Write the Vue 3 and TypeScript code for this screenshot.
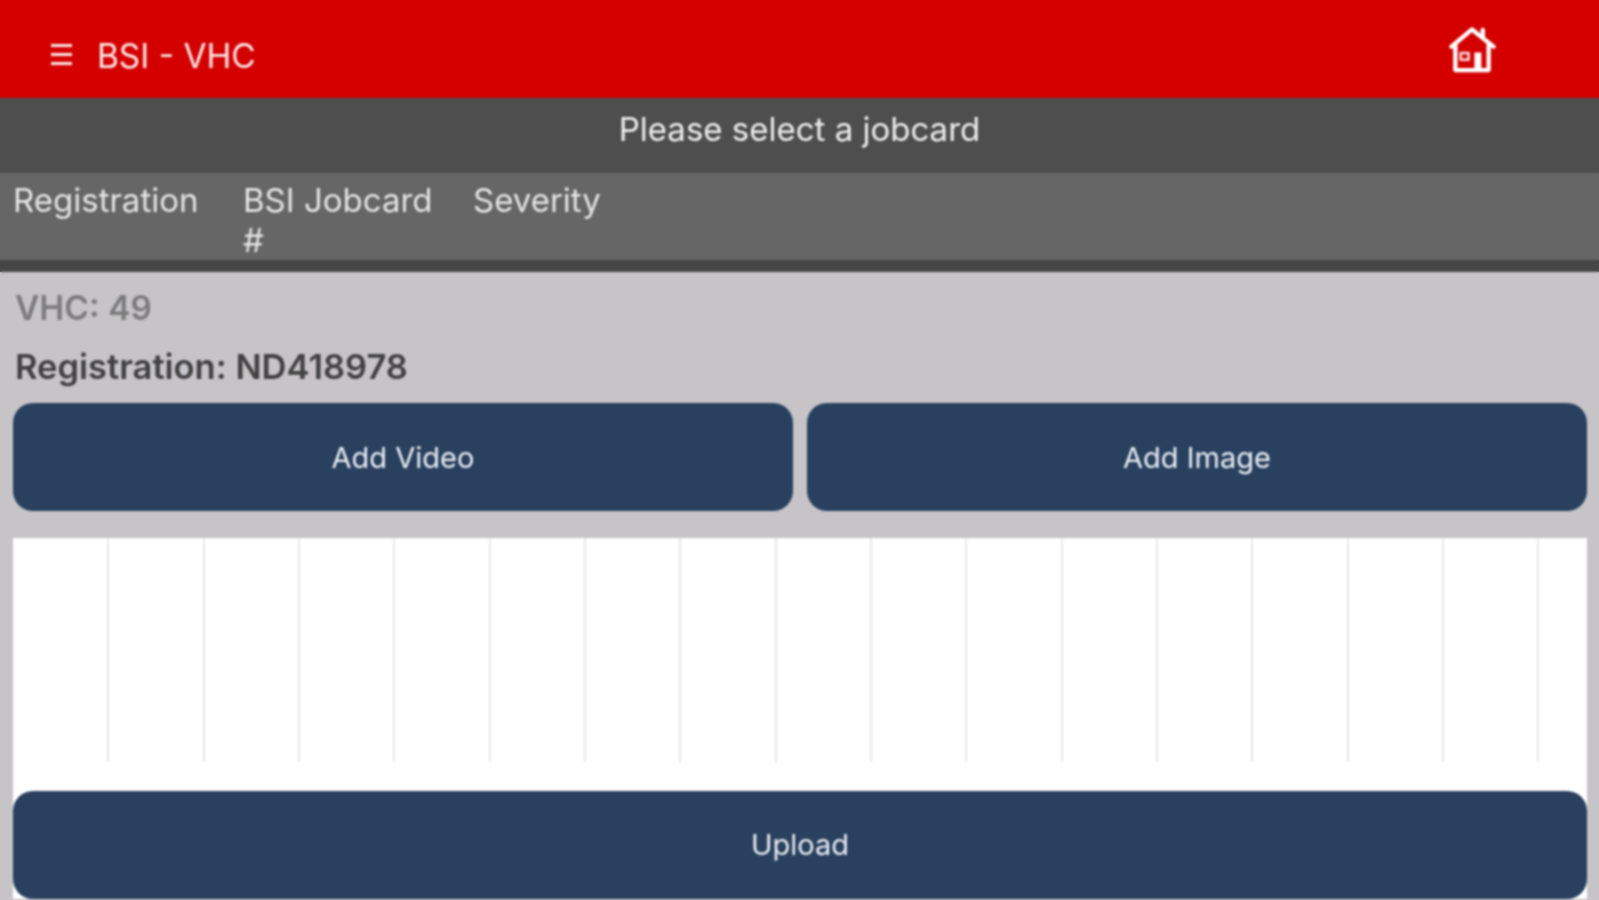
<script setup lang="ts">
const columns: string[] = ['Registration', 'BSI Jobcard #', 'Severity']
const imageSlots: number[] = Array.from({ length: 16 }, (_, i) => i)
</script>

<template>
  <div class="page">
    <header class="topbar">
      <div class="topbar--left">
        <div class="burger">
          <span></span>
          <span></span>
          <span></span>
        </div>
        <span class="topbar--title">BSI - VHC</span>
      </div>
      <svg class="home" viewBox="0 0 48 48" fill="none" stroke="#fff" stroke-width="4.4" stroke-linejoin="round" stroke-linecap="round">
        <path d="M3 20 L24 2.5 L46 20" />
        <path d="M35 3 V10" />
        <path d="M7 18 V44 H41 V18" />
        <rect x="26.5" y="26" width="7" height="18" fill="#fff" stroke="none" />
        <rect x="12.5" y="26.5" width="8" height="7" stroke-width="2.6" stroke-opacity="0.85" />
      </svg>
    </header>

    <div class="subtitle">Please select a jobcard</div>

    <div class="columns">
      <div v-for="column in columns" :key="column" class="columns--cell">{{ column }}</div>
    </div>

    <main class="content">
      <div class="vhc">VHC: 49</div>
      <div class="registration">Registration: ND418978</div>

      <div class="actions">
        <button class="btn">Add Video</button>
        <button class="btn">Add Image</button>
      </div>

      <div class="panel">
        <div class="slots">
          <div v-for="slot in imageSlots" :key="slot" class="slot"></div>
        </div>
        <button class="btn btn--upload">Upload</button>
      </div>
    </main>
  </div>
</template>

<style>
html,
body {
  margin: 0;
  overflow: hidden;
}
/* same bands as the page so the blur doesn't lighten the window edges */
body {
  height: 900px;
  background: linear-gradient(
    #d40000 98px,
    #4e4e4e 98px 173px,
    #666 173px 260px,
    #464646 260px 272px,
    #c6c4c7 272px
  );
}
</style>

<style scoped>
.page {
  width: 1599px;
  height: 900px;
  overflow: hidden;
  font-family: Inter, 'Liberation Sans', Arial, sans-serif;
  background: #c6c4c7;
  filter: blur(0.9px);
}
.topbar {
  height: 98px;
  box-sizing: border-box;
  background: #d40000;
  display: flex;
  align-items: flex-start;
  justify-content: space-between;
  padding: 27px 103px 0 51px;
}
.topbar--left {
  display: flex;
  align-items: center;
  gap: 25px;
  margin-top: 10px;
}
.burger {
  width: 21px;
  margin-bottom: 3px;
  display: flex;
  flex-direction: column;
  gap: 6px;
}
.burger span {
  height: 3px;
  background: #fbe6e6;
}
.topbar--title {
  font-size: 33.4px;
  line-height: 38px;
  color: #fbe6e6;
}
.home {
  width: 48px;
  height: 47px;
}
.subtitle {
  height: 75px;
  background: #4e4e4e;
  color: #eee;
  font-size: 33px;
  line-height: 63px;
  text-align: center;
}
.columns {
  height: 99px;
  box-sizing: border-box;
  background: #666;
  border-bottom: 12px solid #464646;
  padding: 7px 13px 0;
  display: grid;
  grid-template-columns: repeat(3, 190px);
  column-gap: 40px;
}
.columns--cell {
  font-size: 33px;
  line-height: 40px;
  color: #e4e4e4;
}
.content {
  padding: 17px 12px 0 13px;
}
.vhc {
  padding-left: 2px;
  font-size: 33.5px;
  line-height: 38px;
  font-weight: 600;
  color: #7c7c7c;
}
.registration {
  padding-left: 2px;
  margin-top: 21px;
  font-size: 34.5px;
  line-height: 38px;
  font-weight: 600;
  color: #414141;
}
.actions {
  display: grid;
  grid-template-columns: 1fr 1fr;
  column-gap: 14px;
  margin-top: 17px;
}
.btn {
  height: 108px;
  border: none;
  border-radius: 20px;
  background: #29405f;
  color: #eaeff4;
  font-family: inherit;
  font-size: 29px;
  padding: 0;
}
.panel {
  margin-top: 27px;
  background: #fff;
}
.slots {
  display: flex;
  height: 224px;
  margin-bottom: 29px;
  padding-left: 1px;
}
.slot {
  width: 95.33px;
  box-sizing: border-box;
  flex: none;
  border-right: 2px solid #e8e8e8;
}
.btn--upload {
  display: block;
  width: 100%;
  padding-bottom: 2px;
}
</style>
